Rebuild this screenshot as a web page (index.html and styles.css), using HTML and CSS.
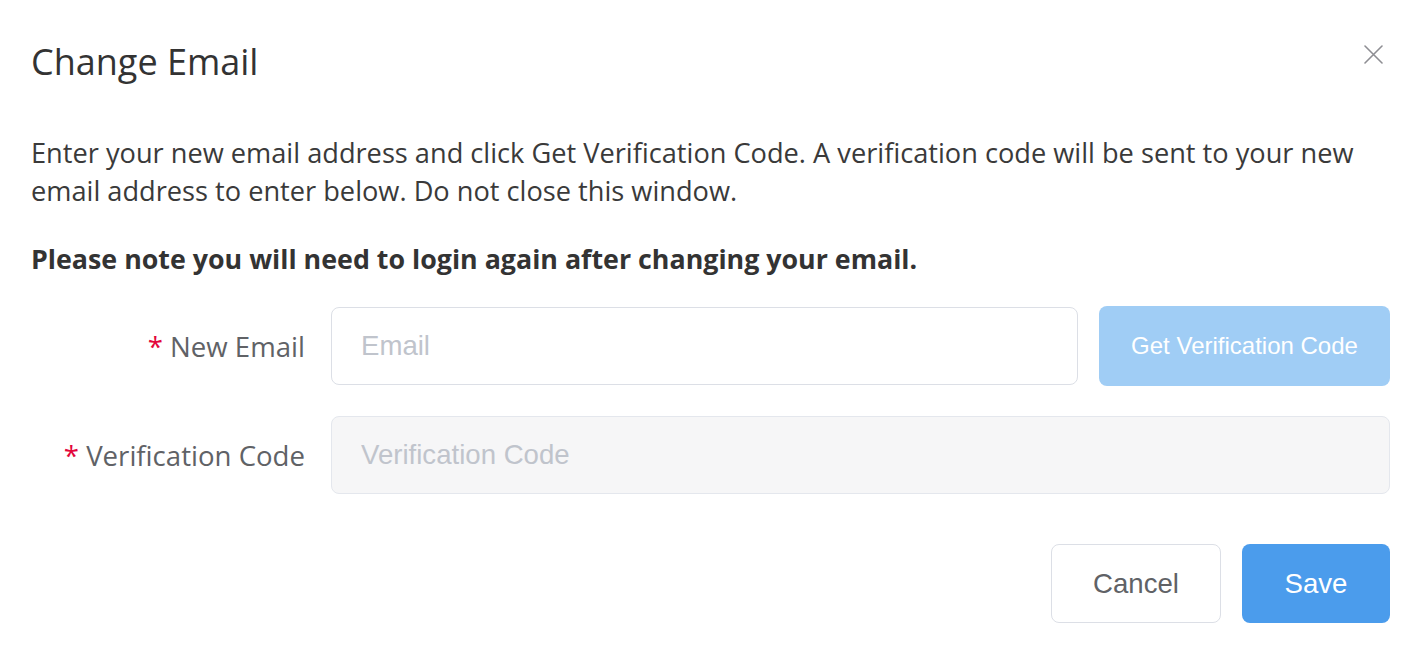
FILE: index.html
```html
<!DOCTYPE html>
<html lang="en">
<head>
<meta charset="utf-8">
<title>Change Email</title>
<link rel="stylesheet" href="styles.css">
</head>
<body>
<div class="dialog">
  <div class="dialog-header">
    <h1 class="dialog-title">Change Email</h1>
    <button class="close-btn" aria-label="Close">
      <svg width="19" height="19" viewBox="0 0 19 19"><path d="M1 1L18 18M18 1L1 18" stroke="#8e8e93" stroke-width="1.6" fill="none" stroke-linecap="round"/></svg>
    </button>
  </div>
  <div class="dialog-body">
    <p class="intro">Enter your new email address and click Get Verification Code. A verification code will be sent to your new email address to enter below. Do not close this window.</p>
    <p class="note">Please note you will need to login again after changing your email.</p>
    <form class="form">
      <div class="form-row">
        <label class="form-label"><span class="req">*</span> New Email</label>
        <div class="form-control with-btn">
          <input class="input" type="text" placeholder="Email">
          <button type="button" class="btn btn-code">Get Verification Code</button>
        </div>
      </div>
      <div class="form-row">
        <label class="form-label"><span class="req">*</span> Verification Code</label>
        <div class="form-control">
          <input class="input" type="text" placeholder="Verification Code" disabled>
        </div>
      </div>
    </form>
  </div>
  <div class="dialog-footer">
    <button class="btn btn-cancel">Cancel</button>
    <button class="btn btn-save">Save</button>
  </div>
</div>
</body>
</html>
```
FILE: styles.css
```css
* { box-sizing: border-box; }
html, body { margin: 0; padding: 0; background: #fff; }
body { font-family: "Open Sans", "Noto Sans", sans-serif; color: #333; }

.dialog { padding: 40px 36px 0 31px; }

.dialog-header { display: flex; justify-content: space-between; align-items: flex-start; }
.dialog-title { margin: 0; font-size: 36px; line-height: 44px; font-weight: 400; color: #333; }
.close-btn { margin: 5px 7px 0 0; padding: 0; border: 0; background: none; width: 19px; height: 19px; display: flex; cursor: pointer; }

.dialog-body { margin-top: 50px; }
.intro { margin: 0; font-size: 27.2px; line-height: 38px; color: #3a3a3a; }
.note { margin: 30px 0 0; font-size: 26.8px; line-height: 38px; font-weight: 700; color: #333; }

.form { margin-top: 28px; display: flex; flex-direction: column; gap: 29px; }
.form-row { display: grid; grid-template-columns: 300px 1fr; align-items: center; height: 80px; }
.form-label { text-align: right; padding-right: 26px; font-size: 27.6px; color: #606266; white-space: nowrap; }
.req { color: #e3063b; }
.form-control { display: flex; align-items: center; gap: 21px; }

.input { flex: 1; height: 78px; min-width: 0; border: 1.5px solid #dcdfe6; border-radius: 8px; padding: 0 29px; font-family: "Liberation Sans", Arial, sans-serif; font-size: 27.6px; color: #606266; background: #fff; outline: none; }
.input::placeholder { color: #c0c4cc; }
.input:disabled { background: #f6f6f7; border-color: #e4e7ed; }
.input:disabled::placeholder { color: #c0c4cc; }

.btn { font-family: "Liberation Sans", Arial, sans-serif; border-radius: 8px; cursor: pointer; }
.btn-code { width: 291px; height: 80px; border: 0; background: #a0cdf5; color: #fff; font-size: 24px; }

.dialog-footer { margin-top: 49px; display: flex; justify-content: flex-end; gap: 21px; }
.btn-cancel { width: 170px; height: 79px; background: #fff; border: 1.5px solid #dcdfe6; color: #606266; font-size: 27.6px; }
.btn-save { width: 148px; height: 79px; background: #4b9cec; border: 0; color: #fff; font-size: 27.6px; }
```
